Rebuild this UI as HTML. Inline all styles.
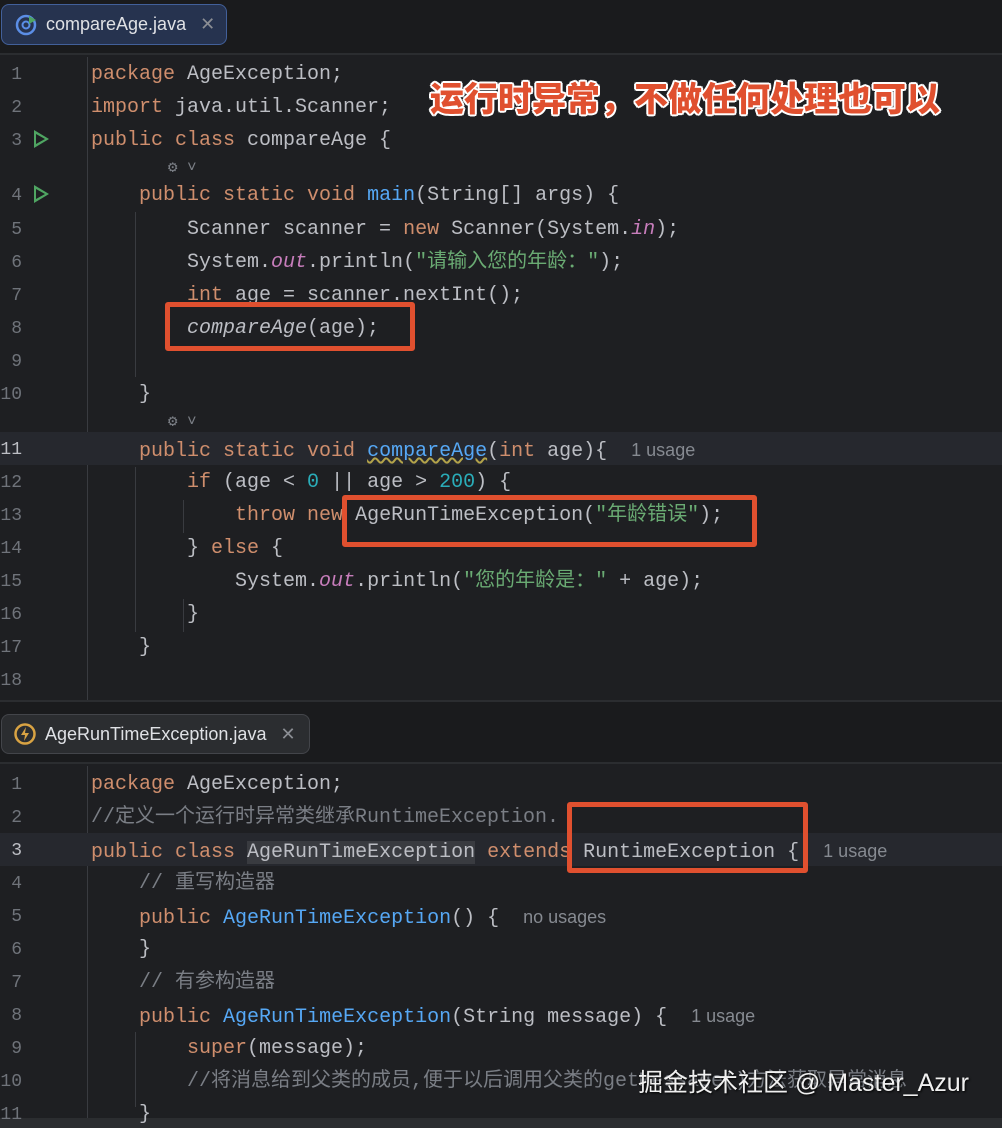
<!DOCTYPE html>
<html><head><meta charset="utf-8"><style>
*{margin:0;padding:0;box-sizing:border-box}
body{width:1002px;height:1128px;background:#1e1f22;position:relative;overflow:hidden;font-family:"Liberation Mono","Noto Sans CJK SC",monospace;color:#bcbec4}
.l{position:absolute;left:91px;height:26px;line-height:26px;font-size:20px;white-space:pre;margin-top:2px}
.n{position:absolute;left:0;width:22px;text-align:right;height:26px;line-height:26px;font-size:18px;color:#6f737a;margin-top:2px}
.k{color:#cf8e6d}.m{color:#56a8f5}.s{color:#6aab73}.num{color:#2aacb8}.c{color:#7a7e85}.p{color:#c77dbb;font-style:italic}.i{font-style:italic}
.h{color:#868a91;font-family:"Liberation Sans","Noto Sans CJK SC",sans-serif;font-size:18px}
.box{position:absolute;border:5px solid #e0502f;border-radius:3px}
.tab{position:absolute;font-family:"Liberation Sans",sans-serif;font-size:18px;color:#dfe1e5;border-radius:8px;display:flex;align-items:center}
.g{position:absolute;width:1px;background:#393b40}
.run{position:absolute;left:34px;width:0;height:0;border-left:15px solid #4fa562;border-top:9px solid transparent;border-bottom:9px solid transparent}
.run:after{content:"";position:absolute;left:-13px;top:-5px;border-left:9px solid #1e1f22;border-top:5px solid transparent;border-bottom:5px solid transparent}
</style></head><body>
<div style="position:absolute;left:0;top:0;width:1002px;height:55px;background:#1a1b1d;border-bottom:2px solid #2b2d30"></div>
<div class="tab" style="left:1px;top:4px;width:226px;height:41px;background:#26334f;border:1px solid #42609a">
<svg width="24" height="24" style="margin:0 8px 0 12px" viewBox="0 0 24 24"><circle cx="12" cy="12" r="9" fill="none" stroke="#5b8ee6" stroke-width="2.5"/><circle cx="12" cy="12" r="3.5" fill="none" stroke="#5b8ee6" stroke-width="2"/><path d="M15 3 L22 7 L15 11Z" fill="#4fa562"/></svg>compareAge.java<span style="margin-left:14px;color:#8b8e94">✕</span></div>
<div style="position:absolute;left:0;top:700px;width:1002px;height:2px;background:#2b2d30"></div>
<div style="position:absolute;left:0;top:702px;width:1002px;height:62px;background:#1a1b1d;border-bottom:2px solid #2b2d30"></div>
<div class="tab" style="left:1px;top:714px;width:309px;height:40px;background:#2b2d30;border:1px solid #43454a">
<svg width="24" height="24" style="margin:0 8px 0 11px" viewBox="0 0 24 24"><circle cx="12" cy="12" r="9.5" fill="none" stroke="#d9a343" stroke-width="2.5"/><path d="M13 5 L8 13 H12 L11 19 L16 11 H12Z" fill="#d9a343"/></svg>AgeRunTimeException.java<span style="margin-left:14px;color:#8b8e94">✕</span></div>
<div class="g" style="left:87px;top:57px;height:643px"></div>
<div class="g" style="left:87px;top:766px;height:352px"></div>
<div class="g" style="left:135px;top:212px;height:165px"></div>
<div class="g" style="left:135px;top:467px;height:165px"></div>
<div class="g" style="left:183px;top:500px;height:33px"></div>
<div class="g" style="left:183px;top:599px;height:33px"></div>
<div class="g" style="left:135px;top:1032px;height:75px"></div>
<div style="position:absolute;left:0;top:432px;width:1002px;height:33px;background:#26282e"></div>
<div style="position:absolute;left:0;top:833px;width:1002px;height:33px;background:#26282e"></div>
<div style="position:absolute;left:0;top:1118px;width:1002px;height:10px;background:#2b2d30"></div>
<div class="run" style="top:130px"></div><div class="run" style="top:185px"></div>

<div class="n" style="top:60px">1</div><div class="l" style="top:60px"><span class="k">package</span> AgeException;</div>
<div class="n" style="top:93px">2</div><div class="l" style="top:93px"><span class="k">import</span> java.util.Scanner;</div>
<div class="n" style="top:126px">3</div><div class="l" style="top:126px"><span class="k">public class</span> compareAge {</div>
<div class="l c" style="top:153px;font-size:16px">        ⚙ ˅</div>
<div class="n" style="top:181px">4</div><div class="l" style="top:181px">    <span class="k">public static void</span> <span class="m">main</span>(String[] args) {</div>
<div class="n" style="top:215px">5</div><div class="l" style="top:215px">        Scanner scanner = <span class="k">new</span> Scanner(System.<span class="p">in</span>);</div>
<div class="n" style="top:248px">6</div><div class="l" style="top:248px">        System.<span class="p">out</span>.println(<span class="s">"请输入您的年龄："</span>);</div>
<div class="n" style="top:281px">7</div><div class="l" style="top:281px">        <span class="k">int</span> age = scanner.nextInt();</div>
<div class="n" style="top:314px">8</div><div class="l" style="top:314px">        <span class="i">compareAge</span>(age);</div>
<div class="n" style="top:347px">9</div>
<div class="n" style="top:380px">10</div><div class="l" style="top:380px">    }</div>
<div class="l c" style="top:407px;font-size:16px">        ⚙ ˅</div>
<div class="n" style="top:435px;color:#bcbec4">11</div><div class="l" style="top:435px">    <span class="k">public static void</span> <span class="m" style="text-decoration:underline wavy #b3a34a">compareAge</span>(<span class="k">int</span> age){  <span class="h">1 usage</span></div>
<div class="n" style="top:468px">12</div><div class="l" style="top:468px">        <span class="k">if</span> (age &lt; <span class="num">0</span> || age &gt; <span class="num">200</span>) {</div>
<div class="n" style="top:501px">13</div><div class="l" style="top:501px">            <span class="k">throw new</span> AgeRunTimeException(<span class="s">"年龄错误"</span>);</div>
<div class="n" style="top:534px">14</div><div class="l" style="top:534px">        } <span class="k">else</span> {</div>
<div class="n" style="top:567px">15</div><div class="l" style="top:567px">            System.<span class="p">out</span>.println(<span class="s">"您的年龄是："</span> + age);</div>
<div class="n" style="top:600px">16</div><div class="l" style="top:600px">        }</div>
<div class="n" style="top:633px">17</div><div class="l" style="top:633px">    }</div>
<div class="n" style="top:666px">18</div>

<div class="n" style="top:770px">1</div><div class="l" style="top:770px"><span class="k">package</span> AgeException;</div>
<div class="n" style="top:803px">2</div><div class="l c" style="top:803px">//定义一个运行时异常类继承RuntimeException.</div>
<div class="n" style="top:836px;color:#bcbec4">3</div><div class="l" style="top:836px"><span class="k">public class</span> <span style="background:#393b40">AgeRunTimeException</span> <span class="k">extends</span> RuntimeException {  <span class="h">1 usage</span></div>
<div class="n" style="top:869px">4</div><div class="l c" style="top:869px">    // 重写构造器</div>
<div class="n" style="top:902px">5</div><div class="l" style="top:902px">    <span class="k">public</span> <span class="m">AgeRunTimeException</span>() {  <span class="h">no usages</span></div>
<div class="n" style="top:935px">6</div><div class="l" style="top:935px">    }</div>
<div class="n" style="top:968px">7</div><div class="l c" style="top:968px">    // 有参构造器</div>
<div class="n" style="top:1001px">8</div><div class="l" style="top:1001px">    <span class="k">public</span> <span class="m">AgeRunTimeException</span>(String message) {  <span class="h">1 usage</span></div>
<div class="n" style="top:1034px">9</div><div class="l" style="top:1034px">        <span class="k">super</span>(message);</div>
<div class="n" style="top:1067px">10</div><div class="l c" style="top:1067px">        //将消息给到父类的成员,便于以后调用父类的getMessage()方法获取异常消息</div>
<div class="n" style="top:1100px">11</div><div class="l" style="top:1100px">    }</div>

<div class="box" style="left:165px;top:302px;width:250px;height:49px"></div>
<div class="box" style="left:342px;top:495px;width:415px;height:52px"></div>
<div class="box" style="left:567px;top:802px;width:241px;height:71px"></div>
<div style="position:absolute;left:430px;top:76px;font-family:'Noto Sans CJK SC',sans-serif;font-weight:900;font-size:34px;line-height:42px;color:#e0502f;text-shadow:2px 0 #fff,-2px 0 #fff,0 2px #fff,0 -2px #fff,1.5px 1.5px #fff,-1.5px -1.5px #fff,1.5px -1.5px #fff,-1.5px 1.5px #fff;white-space:nowrap">运行时异常，不做任何处理也可以</div>
<div style="position:absolute;left:638px;top:1066px;font-family:'Liberation Sans','Noto Sans CJK SC',sans-serif;font-size:25px;line-height:34px;color:#f0f0f0;text-shadow:1px 1px 2px #000;white-space:nowrap">掘金技术社区 @ Master_Azur</div>
</body></html>
